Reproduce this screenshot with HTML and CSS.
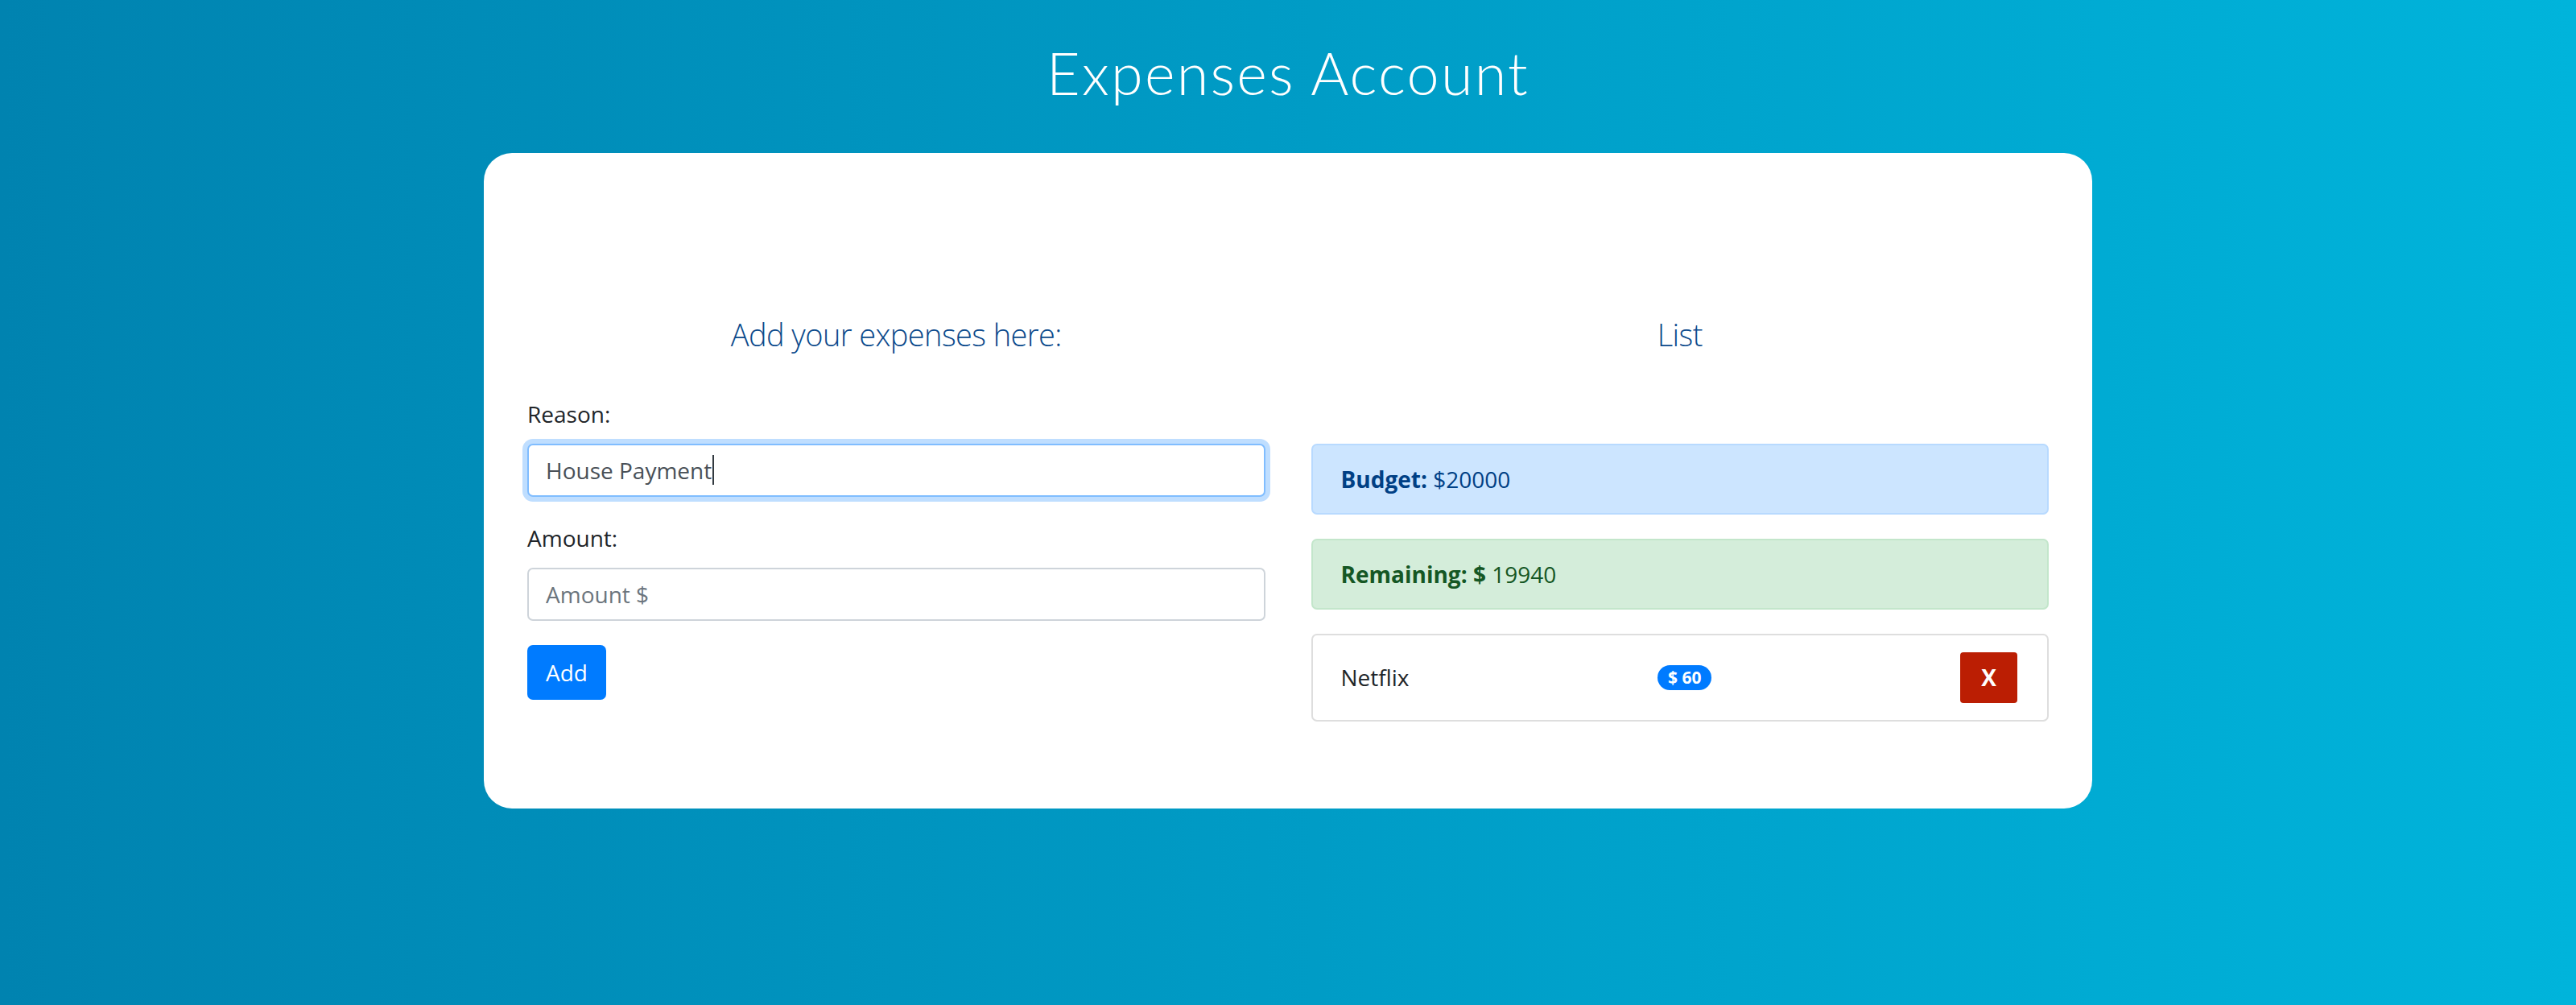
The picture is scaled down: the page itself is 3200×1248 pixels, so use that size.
FILE: index.html
```html
<!DOCTYPE html>
<html lang="en">
<head>
<meta charset="utf-8">
<title>Expenses Account</title>
<link rel="stylesheet" href="styles.css">
</head>
<body>
<main class="page">
  <h1 class="title">Expenses Account</h1>
  <section class="card">
    <div class="col">
      <h4 class="col-heading">Add your expenses here:</h4>
      <form class="expense-form" onsubmit="return false">
        <div class="form-group">
          <label class="label" for="reason">Reason:</label>
          <div class="form-control focused" id="reason" role="textbox"><span class="value">House Payment</span><span class="caret"></span></div>
        </div>
        <div class="form-group">
          <label class="label" for="amount">Amount:</label>
          <input class="form-control" id="amount" type="text" placeholder="Amount $">
        </div>
        <button class="btn btn-primary" type="submit">Add</button>
      </form>
    </div>
    <div class="col">
      <h4 class="col-heading col-heading-list">List</h4>
      <div class="alert alert-primary"><strong>Budget:</strong> $20000</div>
      <div class="alert alert-success"><strong>Remaining: $</strong> 19940</div>
      <ul class="list">
        <li class="list-item">
          <span class="item-name">Netflix</span>
          <span class="badge">$ 60</span>
          <button class="btn btn-delete" type="button">X</button>
        </li>
      </ul>
    </div>
  </section>
</main>
</body>
</html>
```

FILE: styles.css
```css
* {
  box-sizing: border-box;
}

html, body {
  margin: 0;
  padding: 0;
}

body {
  min-height: 100vh;
  background: linear-gradient(to right, #0083b0, #00b4db);
  font-family: "Open Sans", "Noto Sans", "Liberation Sans", sans-serif;
  font-size: 28px;
  line-height: 1.5;
  color: #212529;
}

.page {
  display: flex;
  flex-direction: column;
  align-items: center;
}

.title {
  margin: 47px 0 0;
  font-family: Lato, "Open Sans", sans-serif;
  font-weight: 300;
  font-size: 72px;
  line-height: 1.2;
  color: #ffffff;
  letter-spacing: 2.2px;
}

.card {
  width: 1998px;
  margin-top: 57px;
  background: #ffffff;
  border-radius: 35px;
  padding: 203px 54px 108px;
  display: grid;
  grid-template-columns: 1fr 1fr;
  column-gap: 57px;
  align-items: start;
}

.col {
  display: flex;
  flex-direction: column;
}

.col-heading {
  margin: 0 0 54px;
  text-align: center;
  font-size: 38px;
  font-weight: 300;
  line-height: 1.2;
  color: #0b4a8c;
  letter-spacing: -0.6px;
}

.col-heading-list {
  margin-bottom: 112px;
}

.expense-form {
  display: flex;
  flex-direction: column;
  align-items: flex-start;
}

.form-group {
  width: 100%;
  margin-bottom: 30px;
}

.label {
  display: inline-block;
  margin-bottom: 16px;
  line-height: 42px;
  color: #212529;
}

.form-control {
  display: flex;
  align-items: center;
  width: 100%;
  height: 66px;
  padding: 10px 21px;
  font-family: inherit;
  font-size: 28px;
  line-height: 42px;
  color: #495057;
  background: #ffffff;
  border: 2px solid #ced4da;
  border-radius: 7px;
  outline: none;
}

.form-control::placeholder {
  color: #6c757d;
}

.form-control.focused {
  border-color: #80bdff;
  box-shadow: 0 0 0 6px rgba(0, 123, 255, 0.25);
}

.caret {
  display: inline-block;
  width: 2px;
  height: 37px;
  margin-left: 1px;
  background: #333a40;
}

.btn {
  font-family: inherit;
  font-size: 28px;
  line-height: 42px;
  border: none;
  border-radius: 7px;
  cursor: pointer;
}

.btn-primary {
  padding: 13px 23px;
  background: #007bff;
  color: #ffffff;
}

.alert {
  padding: 21px 35px;
  margin-bottom: 30px;
  border: 2px solid transparent;
  border-radius: 7px;
  line-height: 42px;
}

.alert strong {
  font-weight: 700;
}

.alert-primary {
  background: #cce5ff;
  border-color: #b8daff;
  color: #004085;
}

.alert-success {
  background: #d4edda;
  border-color: #c3e6cb;
  color: #155724;
}

.list {
  list-style: none;
  margin: 0;
  padding: 0;
}

.list-item {
  display: flex;
  align-items: center;
  justify-content: space-between;
  padding: 21px 37px 21px 35px;
  border: 2px solid #dedede;
  border-radius: 7px;
}

.item-name {
  line-height: 42px;
}

.badge {
  display: inline-block;
  padding: 5px 13px;
  font-size: 21px;
  font-weight: 700;
  line-height: 1;
  color: #ffffff;
  background: #007bff;
  border-radius: 999px;
}

.btn-delete {
  width: 71px;
  height: 63px;
  padding: 0;
  background: #bb1e03;
  color: #ffffff;
  font-weight: 700;
  border-radius: 4px;
}
```
